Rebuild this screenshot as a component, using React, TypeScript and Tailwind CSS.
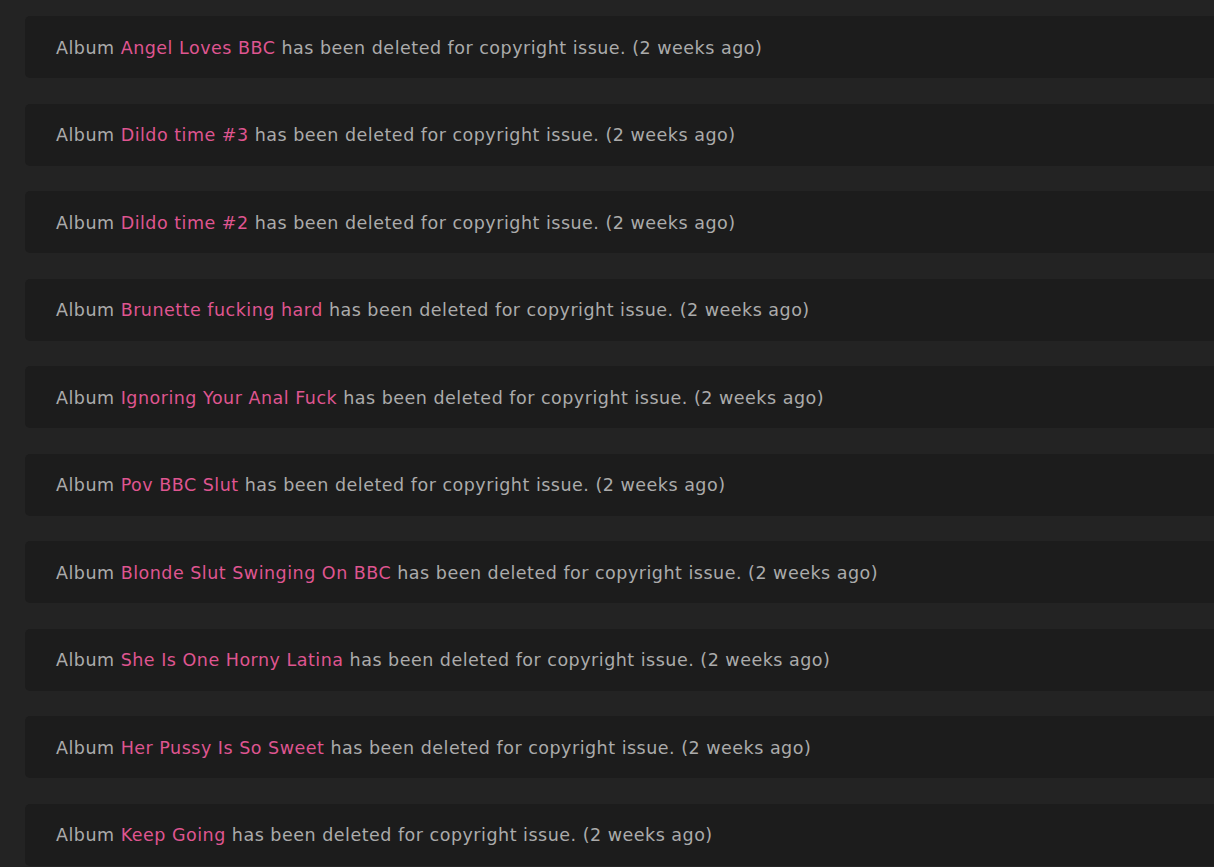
const notices = [
  "Angel Loves BBC",
  "Dildo time #3",
  "Dildo time #2",
  "Brunette fucking hard",
  "Ignoring Your Anal Fuck",
  "Pov BBC Slut",
  "Blonde Slut Swinging On BBC",
  "She Is One Horny Latina",
  "Her Pussy Is So Sweet",
  "Keep Going",
];

export default function App() {
  return (
    <div className="min-h-screen bg-[#232323] pl-[25px] pt-[16px] font-['DejaVu_Sans',sans-serif]">
      <div className="flex flex-col gap-[25.5px]">
        {notices.map((title) => (
          <div
            key={title}
            className="flex h-[62px] items-center rounded-l-[5px] bg-[#1c1c1c] pl-[31px] pt-[2px] text-[17.5px] tracking-[0.5px] text-[#ababab]"
          >
            <p>
              Album <a className="text-[#df5590]">{title}</a> has been deleted for copyright issue. (2 weeks ago)
            </p>
          </div>
        ))}
      </div>
    </div>
  );
}
